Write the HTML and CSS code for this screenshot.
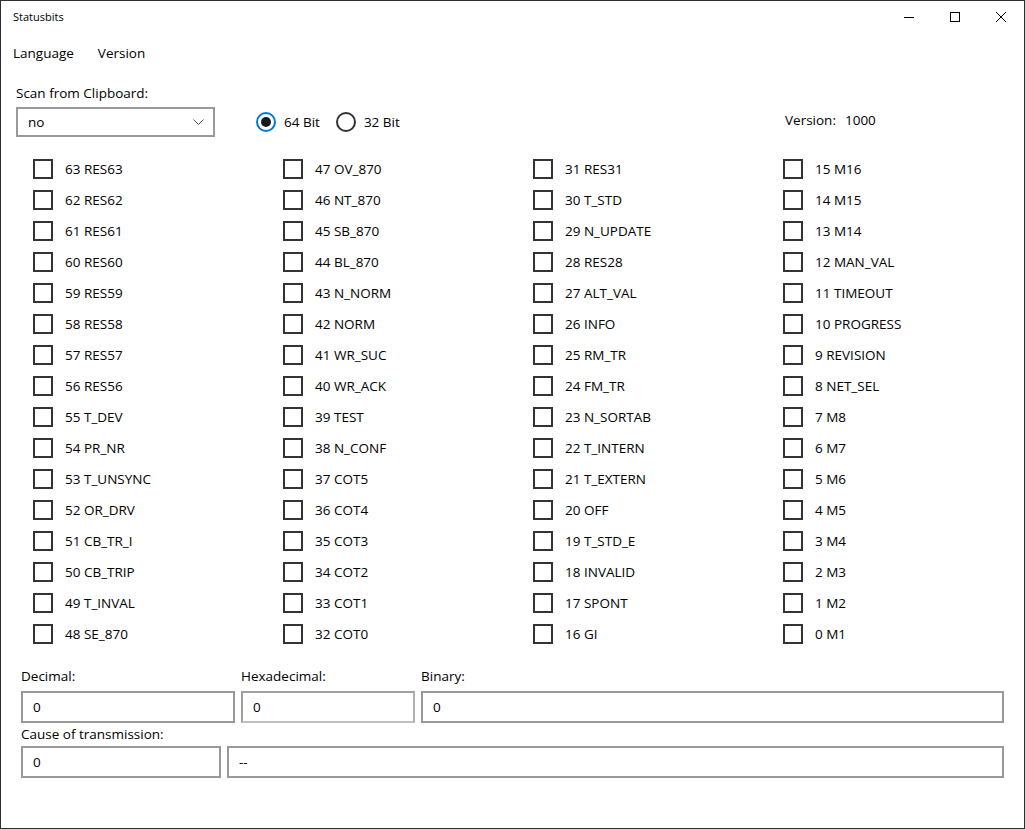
FILE: index.html
```html
<!DOCTYPE html>
<html>
<head>
<meta charset="utf-8">
<title>Statusbits</title>
<link rel="stylesheet" href="styles.css">
</head>
<body>
<div class="window">
  <div class="titlebar">
    <div class="title">Statusbits</div>
    <div class="caption">
      <div class="cbtn"><svg width="10" height="10" viewBox="0 0 10 10"><line x1="0" y1="5.5" x2="10" y2="5.5" stroke="#000" stroke-width="1"/></svg></div>
      <div class="cbtn"><svg width="10" height="10" viewBox="0 0 10 10"><rect x="0.5" y="0.5" width="9" height="9" fill="none" stroke="#000" stroke-width="1"/></svg></div>
      <div class="cbtn"><svg width="10" height="10" viewBox="0 0 10 10"><path d="M0 0L10 10M10 0L0 10" stroke="#000" stroke-width="1"/></svg></div>
    </div>
  </div>
  <div class="menubar">
    <div class="menuitem">Language</div>
    <div class="menuitem">Version</div>
  </div>
  <div class="content">
    <div class="scanlabel">Scan from Clipboard:</div>
    <div class="toprow">
      <div class="combo">
        <span>no</span>
        <svg class="chev" width="11" height="6" viewBox="0 0 11 6"><polyline points="0.5,0.5 5.5,5.5 10.5,0.5" fill="none" stroke="#555" stroke-width="1"/></svg>
      </div>
      <div class="radios">
        <div class="radio"><span class="circle on"><span class="dot"></span></span><span>64 Bit</span></div>
        <div class="radio"><span class="circle"></span><span>32 Bit</span></div>
      </div>
      <div class="version"><span>Version:</span><span class="vnum">1000</span></div>
    </div>
    <div class="bits" id="bits"></div>
    <div class="fields">
      <div class="frow">
        <div class="field f-dec"><div class="flabel">Decimal:</div><div class="input">0</div></div>
        <div class="field f-hex"><div class="flabel">Hexadecimal:</div><div class="input">0</div></div>
        <div class="field f-bin"><div class="flabel">Binary:</div><div class="input">0</div></div>
      </div>
      <div class="frow">
        <div class="field f-cot"><div class="flabel">Cause of transmission:</div><div class="input">0</div></div>
        <div class="field f-cott"><div class="flabel">&nbsp;</div><div class="input">--</div></div>
      </div>
    </div>
  </div>
</div>
<script src="script.js"></script>
</body>
</html>
```
FILE: script.js
```js
const names = [
 "63 RES63","62 RES62","61 RES61","60 RES60","59 RES59","58 RES58","57 RES57","56 RES56","55 T_DEV","54 PR_NR","53 T_UNSYNC","52 OR_DRV","51 CB_TR_I","50 CB_TRIP","49 T_INVAL","48 SE_870",
 "47 OV_870","46 NT_870","45 SB_870","44 BL_870","43 N_NORM","42 NORM","41 WR_SUC","40 WR_ACK","39 TEST","38 N_CONF","37 COT5","36 COT4","35 COT3","34 COT2","33 COT1","32 COT0",
 "31 RES31","30 T_STD","29 N_UPDATE","28 RES28","27 ALT_VAL","26 INFO","25 RM_TR","24 FM_TR","23 N_SORTAB","22 T_INTERN","21 T_EXTERN","20 OFF","19 T_STD_E","18 INVALID","17 SPONT","16 GI",
 "15 M16","14 M15","13 M14","12 MAN_VAL","11 TIMEOUT","10 PROGRESS","9 REVISION","8 NET_SEL","7 M8","6 M7","5 M6","4 M5","3 M4","2 M3","1 M2","0 M1"
];
const bits = document.getElementById('bits');
for (const n of names) {
  const d = document.createElement('div');
  d.className = 'bit';
  const b = document.createElement('span');
  b.className = 'box';
  const l = document.createElement('span');
  l.textContent = n;
  d.appendChild(b); d.appendChild(l);
  bits.appendChild(d);
}
```
FILE: styles.css
```css
* { box-sizing: border-box; }
html, body { margin: 0; padding: 0; background: #fff; }
body {
  font-family: "Open Sans", "Noto Sans", sans-serif;
  font-size: 13.5px;
  color: #000;
}
.window {
  width: 1025px;
  height: 829px;
  border: 1px solid #2e2e2e;
  background: #fff;
  overflow: hidden;
}
.titlebar {
  height: 32px;
  display: flex;
  align-items: center;
}
.title {
  font-size: 11px;
  padding-left: 12px;
  flex: 1;
  line-height: 32px;
}
.caption { display: flex; height: 32px; }
.cbtn {
  width: 46px;
  height: 32px;
  display: flex;
  align-items: center;
  justify-content: center;
}
.menubar {
  height: 40px;
  display: flex;
  align-items: center;
}
.menuitem {
  padding: 0 12px;
  line-height: 40px;
}
.scanlabel {
  margin: 10px 0 0 15px;
  line-height: 20px;
}
.toprow {
  margin-top: 4px;
  display: flex;
  align-items: center;
  height: 30px;
}
.combo {
  margin-left: 15px;
  width: 199px;
  height: 30px;
  border: 2px solid #999;
  display: flex;
  align-items: center;
  padding: 0 9px 0 10px;
}
.combo span { flex: 1; }
.chev { display: block; }
.radios {
  display: flex;
  align-items: center;
  margin-left: 41px;
  gap: 16px;
}
.radio { display: flex; align-items: center; gap: 8px; }
.circle {
  width: 20px;
  height: 20px;
  border-radius: 50%;
  border: 2px solid #333;
  display: flex;
  align-items: center;
  justify-content: center;
}
.circle.on { border-color: #0078d7; }
.dot {
  width: 10px;
  height: 10px;
  border-radius: 50%;
  background: #1a1a1a;
}
.version {
  margin-left: auto;
  width: 239px;
  margin-top: -4px;
}
.vnum { margin-left: 9px; }
.bits {
  margin: 16px 0 0 32px;
  display: grid;
  grid-template-rows: repeat(16, 31px);
  grid-auto-flow: column;
  grid-template-columns: repeat(4, 250px);
}
.bit {
  display: flex;
  align-items: center;
  gap: 12px;
  height: 31px;
}
.box {
  width: 20px;
  height: 20px;
  border: 2px solid #333;
  flex: none;
}
.fields {
  margin: 17px 0 0 20px;
  width: 983px;
}
.frow { display: flex; gap: 6px; }
.field { display: flex; flex-direction: column; }
.flabel { line-height: 20px; margin-bottom: 5px; }
.frow + .frow .flabel { margin-bottom: 2px; }
.frow + .frow { margin-top: 1px; }
.input {
  height: 32px;
  border: 2px solid #999;
  padding: 0 10px;
  line-height: 28px;
}
.f-dec { width: 214px; }
.f-hex { width: 174px; }
.f-hex .input { border-color: #a0a0a0 #b0b0b0 #c0c0c0 #a0a0a0; }
.f-bin { flex: 1; }
.f-cot { width: 200px; }
.f-cott { flex: 1; }
.f-cott .flabel { visibility: hidden; }
```
